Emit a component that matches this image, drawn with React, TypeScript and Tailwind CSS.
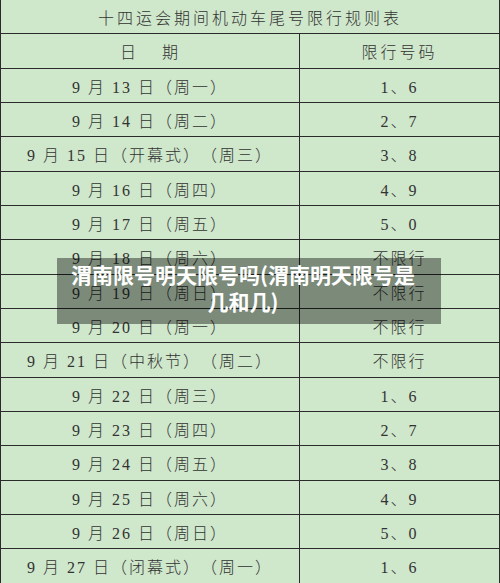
const rows: [string, string][] = [
  ["9 月 13 日（周一）", "1、6"],
  ["9 月 14 日（周二）", "2、7"],
  ["9 月 15 日（开幕式）（周三）", "3、8"],
  ["9 月 16 日（周四）", "4、9"],
  ["9 月 17 日（周五）", "5、0"],
  ["9 月 18 日（周六）", "不限行"],
  ["9 月 19 日（周日）", "不限行"],
  ["9 月 20 日（周一）", "不限行"],
  ["9 月 21 日（中秋节）（周二）", "不限行"],
  ["9 月 22 日（周三）", "1、6"],
  ["9 月 23 日（周四）", "2、7"],
  ["9 月 24 日（周五）", "3、8"],
  ["9 月 25 日（周六）", "4、9"],
  ["9 月 26 日（周日）", "5、0"],
  ["9 月 27 日（闭幕式）（周一）", "1、6"],
];

const App = () => {
  return (
    <div className="relative w-[500px] h-[583px] overflow-hidden bg-[#cfe7cb]">
      {/* Table */}
      <div className="border-x border-[#2b2b2b] text-[16px] text-[#333] font-light [text-spacing-trim:space-all] font-['Liberation_Serif','Noto_Sans_CJK_SC',serif]">
        <div className="h-[34.33px] border-b border-[#2b2b2b] flex items-center justify-center pt-[5px] tracking-[3px]">
          十四运会期间机动车尾号限行规则表
        </div>
        <div className="h-[34.33px] border-b border-[#2b2b2b] grid grid-cols-[299px_1fr]">
          <div className="flex items-center justify-center pt-[5px] border-r border-[#2b2b2b] tracking-[2px]">
            日&nbsp;&nbsp;&nbsp;&nbsp;期
          </div>
          <div className="flex items-center justify-center pt-[5px] tracking-[3px]">限行号码</div>
        </div>
        {rows.map(([date, num]) => (
          <div key={date} className="h-[34.33px] border-b border-[#2b2b2b] grid grid-cols-[299px_1fr]">
            <div className="flex items-center justify-center pt-[5px] border-r border-[#2b2b2b] tracking-[2px] whitespace-pre">
              {date}
            </div>
            <div className="flex items-center justify-center pt-[5px] tracking-[2px]">{num}</div>
          </div>
        ))}
      </div>

      {/* Title overlay */}
      <div className="absolute left-[57px] top-[258px] w-[384px] h-[66px] bg-black/40 pl-[12px] pr-[24px] pt-[3px]">
        <p className="text-center text-white font-bold text-[21px] leading-[27px] font-['Noto_Sans_CJK_SC',sans-serif]">
          渭南限号明天限号吗(渭南明天限号是几和几)
        </p>
      </div>
    </div>
  );
};

export default App;
